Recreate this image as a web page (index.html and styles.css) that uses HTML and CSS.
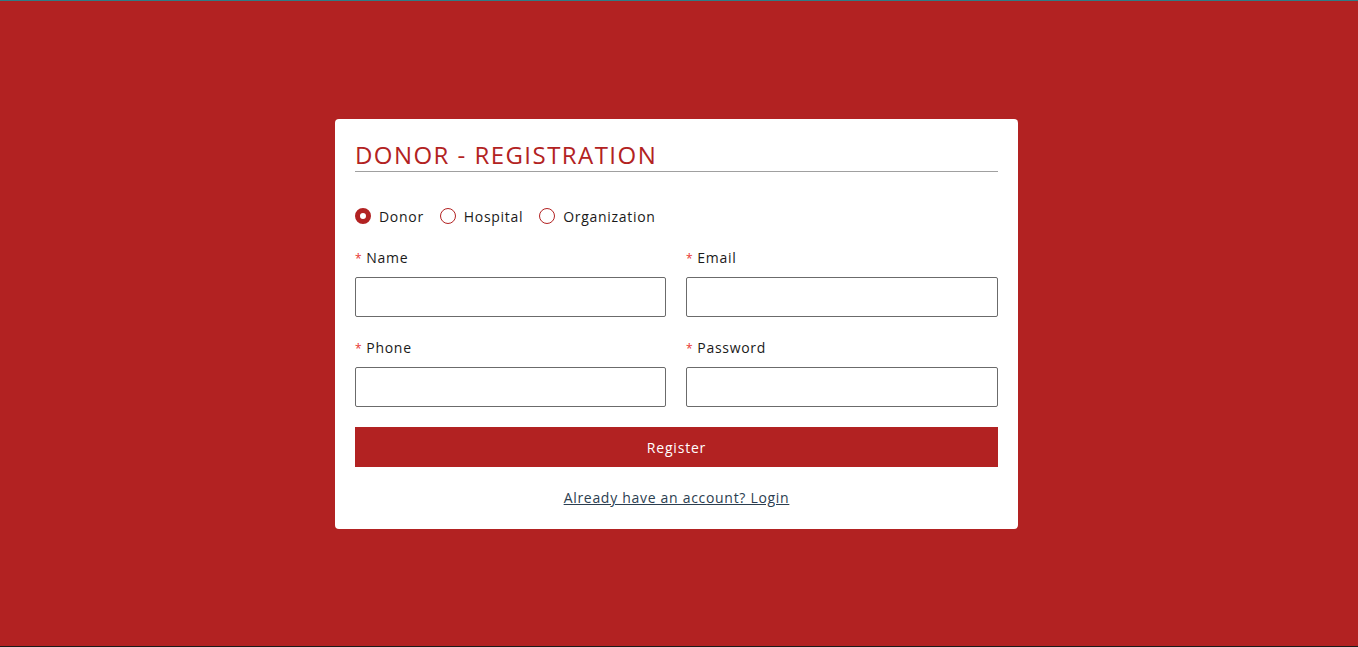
FILE: index.html
```html
<!DOCTYPE html>
<html>
<head>
<meta charset="utf-8">
<link rel="stylesheet" href="styles.css">
</head>
<body>
<div class="page">
  <div class="card">
    <h1 class="title">DONOR - REGISTRATION</h1>
    <div class="radios">
      <label class="radio"><span class="dot checked"></span>Donor</label>
      <label class="radio"><span class="dot"></span>Hospital</label>
      <label class="radio"><span class="dot"></span>Organization</label>
    </div>
    <div class="grid">
      <div class="field">
        <div class="label"><span class="req">*</span>Name</div>
        <div class="input"></div>
      </div>
      <div class="field">
        <div class="label"><span class="req">*</span>Email</div>
        <div class="input"></div>
      </div>
      <div class="field">
        <div class="label"><span class="req">*</span>Phone</div>
        <div class="input"></div>
      </div>
      <div class="field">
        <div class="label"><span class="req">*</span>Password</div>
        <div class="input"></div>
      </div>
    </div>
    <div class="button">Register</div>
    <div class="login"><a href="#">Already have an account? Login</a></div>
  </div>
</div>
</body>
</html>
```
FILE: styles.css
```css
html, body { margin: 0; padding: 0; }
body { font-family: "Open Sans", "Noto Sans", sans-serif; color: #1a1a1a; }
.page {
  box-sizing: border-box;
  height: 647px;
  background: #b22222;
  border-top: 1px solid #2f7c85;
  border-bottom: 1px solid #1a1a1a;
  display: flex;
  align-items: flex-start;
  justify-content: center;
  padding-top: 118px;
  padding-right: 5px;
}
.card {
  box-sizing: border-box;
  width: 683px;
  height: 410px;
  background: #fff;
  border-radius: 4px;
  padding: 20px 20px;
}
.title {
  margin: 0;
  font-weight: 400;
  font-size: 24px;
  line-height: 32px;
  color: #b22222;
  letter-spacing: 1.45px;
  border-bottom: 1px solid #a0a0a0;
  height: 32px;
}
.radios {
  display: flex;
  gap: 16px;
  margin-top: 34px;
  height: 20px;
  align-items: center;
  font-size: 14px;
  letter-spacing: 0.7px;
}
.radio { display: flex; align-items: center; gap: 8px; color: #1a1a1a; }
.dot {
  box-sizing: border-box;
  width: 16px; height: 16px;
  border-radius: 50%;
  border: 1px solid #b22222;
  background: #fff;
}
.dot.checked {
  border: 5px solid #b22222;
}
.grid {
  display: grid;
  grid-template-columns: 311px 312px;
  column-gap: 20px;
  row-gap: 21px;
  margin-top: 22px;
}
.label {
  font-size: 14px;
  height: 20px;
  line-height: 20px;
  letter-spacing: 0.7px;
  color: #1a1a1a;
  margin-bottom: 9px;
}
.req { color: #e8342f; font-size: 12px; margin-right: 4px; }
.input {
  box-sizing: border-box;
  height: 40px;
  border: 1px solid #6b6b6b;
  border-radius: 2px;
}
.button {
  margin-top: 20px;
  height: 40px;
  background: #b22222;
  color: #fff;
  font-size: 14px;
  font-weight: 500;
  letter-spacing: 0.8px;
  display: flex;
  align-items: center;
  justify-content: center;
}
.login {
  text-align: center;
  margin-top: 21px;
  font-size: 14px;
  letter-spacing: 0.7px;
}
.login a { color: #2c3e50; text-decoration: underline; }
```
